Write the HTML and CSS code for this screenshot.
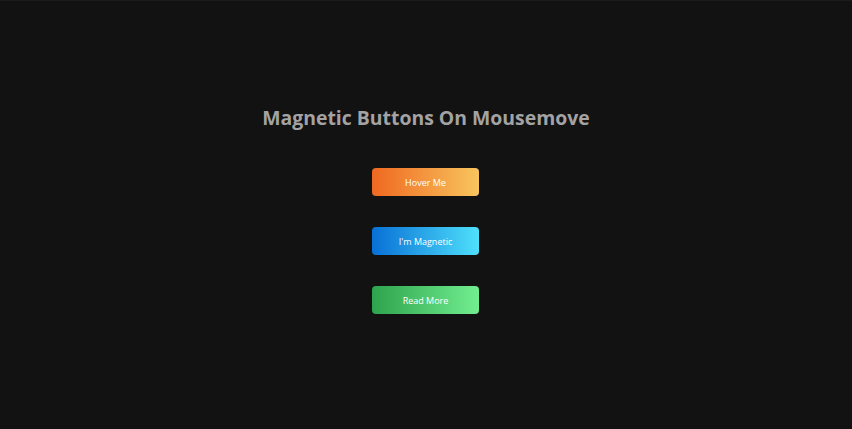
FILE: index.html
```html
<!DOCTYPE html>
<html>
<head>
<meta charset="utf-8">
<link rel="stylesheet" href="styles.css">
</head>
<body>
<main class="page">
  <h1 class="title">Magnetic Buttons On Mousemove</h1>
  <div class="buttons">
    <button class="btn btn-orange">Hover Me</button>
    <button class="btn btn-blue">I'm Magnetic</button>
    <button class="btn btn-green">Read More</button>
  </div>
</main>
</body>
</html>
```
FILE: styles.css
```css
html, body {
  margin: 0;
  padding: 0;
  height: 100%;
}
body {
  background: #121212;
  font-family: "Open Sans", "Noto Sans", sans-serif;
  border-top: 1px solid #1c1c1c;
  box-sizing: border-box;
}
.page {
  display: flex;
  flex-direction: column;
  align-items: center;
  padding-top: 103px;
}
.title {
  margin: 0;
  font-size: 19.4px;
  font-weight: 700;
  color: #a3a3a3;
  line-height: 28px;
}
.buttons {
  display: flex;
  flex-direction: column;
  align-items: center;
  gap: 31px;
  margin-top: 36px;
}
.btn {
  width: 107px;
  height: 28px;
  margin-right: 1px;
  border: none;
  border-radius: 4px;
  color: #ffffff;
  font-family: "Open Sans", "Noto Sans", sans-serif;
  font-size: 9px;
  padding: 0;
}
.btn-orange {
  background: linear-gradient(90deg, #ef6821, #f8c55e);
}
.btn-blue {
  background: linear-gradient(90deg, #0870d6, #4fe0fb);
}
.btn-green {
  background: linear-gradient(90deg, #2da34d, #72ee90);
}
```
